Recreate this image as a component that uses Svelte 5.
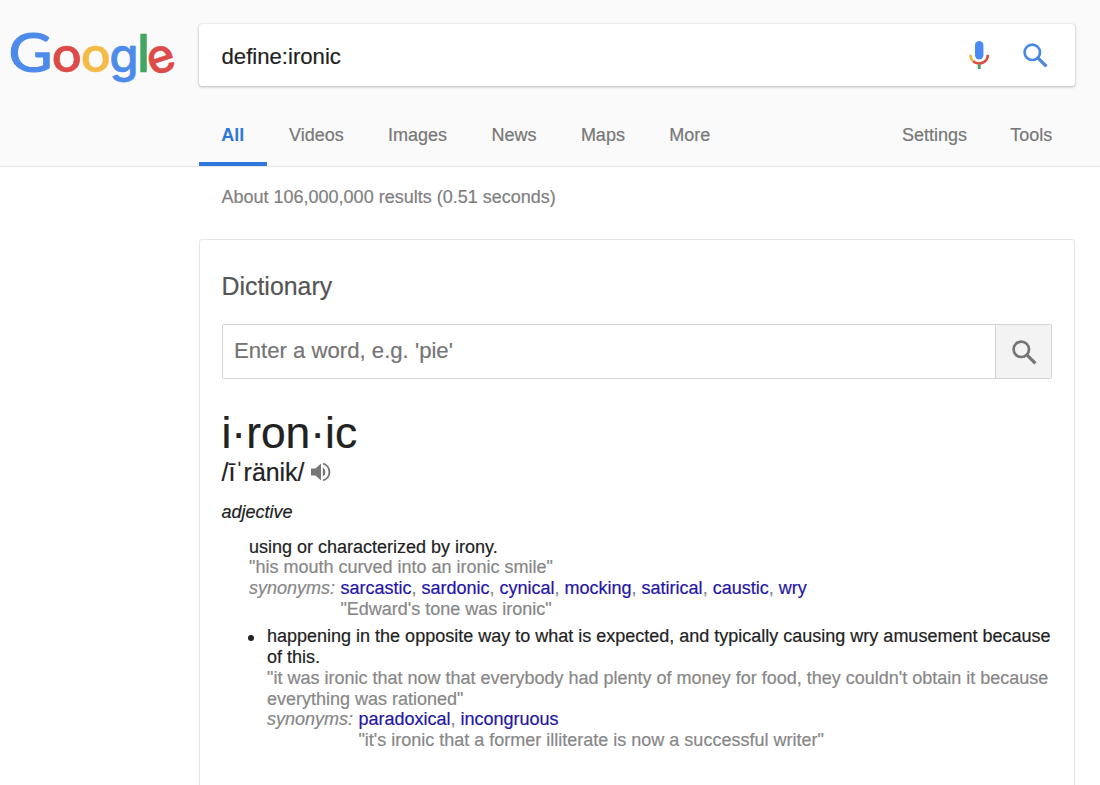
<script lang="ts">
  interface Sense {
    definition: string;
    example: string;
    synonyms: string[];
    usage: string;
    bullet?: boolean;
  }

  let query = $state('define:ironic');
  let word = $state('');
  let active = $state('All');

  const tabs = ['All', 'Videos', 'Images', 'News', 'Maps', 'More'];
  const tools = ['Settings', 'Tools'];

  const senses: Sense[] = [
    {
      definition: 'using or characterized by irony.',
      example: 'his mouth curved into an ironic smile',
      synonyms: ['sarcastic', 'sardonic', 'cynical', 'mocking', 'satirical', 'caustic', 'wry'],
      usage: "Edward's tone was ironic",
    },
    {
      definition:
        'happening in the opposite way to what is expected, and typically causing wry amusement because of this.',
      example:
        "it was ironic that now that everybody had plenty of money for food, they couldn't obtain it because everything was rationed",
      synonyms: ['paradoxical', 'incongruous'],
      usage: "it's ironic that a former illiterate is now a successful writer",
      bullet: true,
    },
  ];
</script>

{#snippet magnifier()}
  <svg class="magnifier" viewBox="0 0 25 25" aria-hidden="true">
    <circle cx="9.3" cy="9.3" r="7.7" fill="none" stroke="currentColor" stroke-width="2.7" />
    <path d="M14.6 14.6L23.4 23.4" fill="none" stroke="currentColor" stroke-width="3.3" />
  </svg>
{/snippet}

<header>
  <div class="top">
    <svg class="logo" viewBox="0 0 199 90" role="img" aria-label="Google">
      <text class="cap blue" x="8.5" y="72" textLength="44" lengthAdjust="spacingAndGlyphs">G</text>
      <text class="red" x="51.4" y="72.2" textLength="30.5" lengthAdjust="spacingAndGlyphs">o</text>
      <text class="yellow" x="80.4" y="72.2" textLength="30.5" lengthAdjust="spacingAndGlyphs">o</text>
      <text class="blue" x="109.3" y="72.2">g</text>
      <text class="tall green" x="137" y="71.5">l</text>
      <text class="red" x="147.2" y="72.2" transform="rotate(-18 162 59.5)">e</text>
    </svg>
    <form class="search" onsubmit={(e) => e.preventDefault()}>
      <input bind:value={query} aria-label="Search" spellcheck="false" />
      <button type="button" class="mic" aria-label="Search by voice">
        <svg viewBox="0 0 20 28" aria-hidden="true">
          <rect x="6" y="0" width="8.4" height="18.4" rx="4.2" fill="#4a8af4" />
          <path d="M1.3 13.8A8.9 8.9 0 0 0 4 20.1" fill="none" stroke="#f2b53d" stroke-width="2.6" />
          <path d="M4 20.1A8.9 8.9 0 0 0 18.9 13.8" fill="none" stroke="#dc4b3e" stroke-width="2.6" />
          <path d="M10.2 23.4V28" stroke="#4a9a5c" stroke-width="2.8" />
        </svg>
      </button>
      <button class="go" aria-label="Search">{@render magnifier()}</button>
    </form>
  </div>
  <nav>
    {#each tabs as tab}
      <button class="tab" class:active={tab === active} onclick={() => (active = tab)}>{tab}</button>
    {/each}
    <span class="spacer"></span>
    {#each tools as tool}
      <button class="tab tool">{tool}</button>
    {/each}
  </nav>
</header>

<main>
  <p class="stats">About 106,000,000 results (0.51 seconds)</p>

  <section class="card">
    <h2>Dictionary</h2>
    <form class="lookup" onsubmit={(e) => e.preventDefault()}>
      <input bind:value={word} placeholder="Enter a word, e.g. 'pie'" />
      <button aria-label="Look up">{@render magnifier()}</button>
    </form>

    <h1>i·ron·ic</h1>
    <div class="phonetic">
      <span>/īˈränik/</span>
      <svg class="speaker" viewBox="0 0 20 20" aria-hidden="true">
        <path d="M0 6.6H4.4L10 1.4V18.6L4.4 13.4H0Z" fill="#767676" />
        <path d="M11.8 5.6A5 5 0 0 1 11.8 14.4Z" fill="#767676" />
        <path d="M12 1.6A8.7 8.7 0 0 1 12 18.4" fill="none" stroke="#767676" stroke-width="1.9" />
      </svg>
    </div>
    <p class="pos">adjective</p>

    <ul>
      {#each senses as sense}
        <li class:bullet={sense.bullet}>
          <div class="definition">{sense.definition}</div>
          <div class="example">"{sense.example}"</div>
          <div class="synonyms">
            <i>synonyms:</i>
            <div>
              {#each sense.synonyms as synonym, i}{#if i > 0}{', '}{/if}<a href="#{synonym}">{synonym}</a>{/each}
              <div>"{sense.usage}"</div>
            </div>
          </div>
        </li>
      {/each}
    </ul>
  </section>
</main>

<style>
  :global(body) {
    background: #fff;
  }

  :global(#app) {
    height: 785px;
    overflow: hidden;
  }

  header,
  main,
  input,
  button {
    font-family: 'Liberation Sans', Arial, sans-serif;
    font-size: 18px;
    -webkit-text-stroke: 0.2px;
  }

  input,
  button {
    border: 0;
    padding: 0;
    margin: 0;
    background: none;
    outline: none;
  }

  header {
    box-sizing: border-box;
    height: 167px;
    background: #fafafa;
    border-bottom: 1px solid #e6e6e6;
    display: flex;
    flex-direction: column;
    justify-content: space-between;
  }

  .top {
    display: flex;
    align-items: flex-start;
  }

  .logo {
    width: 199px;
    height: 90px;
    font-family: Inter, sans-serif;
    font-size: 47.5px;
    font-weight: 500;
    stroke-width: 0.6px;
  }

  .logo .cap {
    font-family: Lato, sans-serif;
    font-size: 54px;
    font-weight: 400;
    stroke-width: 1.2px;
  }

  .logo .tall {
    font-size: 52px;
  }

  .blue {
    fill: #4d8bea;
    stroke: #4d8bea;
  }

  .red {
    fill: #dc4b48;
    stroke: #dc4b48;
  }

  .yellow {
    fill: #f4bb48;
    stroke: #f4bb48;
  }

  .green {
    fill: #43a662;
    stroke: #43a662;
  }

  .search {
    box-sizing: border-box;
    width: 876px;
    height: 62px;
    margin-top: 24px;
    padding: 0 27px 0 22.5px;
    display: flex;
    align-items: center;
    background: #fff;
    border-radius: 3px;
    box-shadow: 0 1px 3px rgba(0, 0, 0, 0.25), 0 0 1px rgba(0, 0, 0, 0.2);
  }

  .search input {
    flex: 1;
    height: 40px;
    font-size: 22.15px;
    color: #222;
    padding-top: 3px;
  }

  .mic {
    width: 20px;
    height: 28px;
    margin-right: 34px;
  }

  .mic svg,
  .magnifier,
  .speaker {
    display: block;
  }

  .magnifier {
    width: 25px;
    height: 25px;
  }

  .go {
    color: #4a89e0;
  }

  nav {
    display: flex;
    width: 876px;
    height: 62px;
    margin-left: 199px;
  }

  .tab {
    box-sizing: border-box;
    padding: 4px 22.2px 0;
    color: #777;
    border-bottom: 4px solid transparent;
  }

  .tab.active {
    padding-right: 22.6px;
    color: #2f77d8;
    font-weight: bold;
    border-bottom-color: #2f77d8;
    -webkit-text-stroke: 0;
  }

  .tool + .tool {
    padding-left: 21px;
    padding-right: 22.7px;
  }

  .spacer {
    flex: 1;
  }

  main {
    width: 876px;
    margin-left: 199px;
    color: #222;
    line-height: 20.75px;
  }

  .stats {
    margin: 0;
    padding: 20px 22.5px 31px;
    color: #808080;
  }

  .card {
    box-sizing: border-box;
    height: 600px;
    padding: 32px 22px 0 21.5px;
    border: 1px solid #e6e6e6;
    border-radius: 3px;
    box-shadow: 0 1px 2px rgba(0, 0, 0, 0.08);
  }

  h2 {
    margin: 0;
    font-size: 24.9px;
    font-weight: normal;
    line-height: 28px;
    color: #555;
  }

  .lookup {
    box-sizing: border-box;
    display: flex;
    height: 55px;
    margin-top: 24px;
    border: 1px solid #d4d4d4;
    border-radius: 2px;
  }

  .lookup input {
    flex: 1;
    padding: 0 0 1px 11.5px;
    font-size: 22.15px;
  }

  .lookup input::placeholder {
    color: #757575;
  }

  .lookup button {
    box-sizing: border-box;
    width: 56px;
    padding: 2px 0 0 1px;
    display: flex;
    align-items: center;
    justify-content: center;
    color: #757575;
    background: #f3f3f3;
    border-left: 1px solid #d4d4d4;
  }

  h1 {
    margin: 29px 0 0;
    font-size: 44.4px;
    font-weight: normal;
    line-height: 50px;
  }

  .phonetic {
    display: flex;
    align-items: center;
    gap: 6px;
    font-size: 24.9px;
    line-height: 29px;
  }

  .speaker {
    width: 20px;
    height: 20px;
  }

  .pos {
    margin: 15px 0 0;
    font-style: italic;
  }

  ul {
    margin: 14px 0 0;
    padding: 0 0 0 27.5px;
    list-style: none;
  }

  li.bullet {
    display: grid;
    position: relative;
    margin-top: 6.8px;
    padding-left: 18px;
  }

  li.bullet::before {
    content: '';
    position: absolute;
    left: -1px;
    top: 9px;
    width: 6px;
    height: 6px;
    border-radius: 50%;
    background: #222;
  }

  .example,
  .synonyms {
    color: #878787;
  }

  .synonyms {
    display: flex;
    gap: 5.4px;
  }

  a {
    color: #1f16a6;
    text-decoration: none;
  }
</style>
